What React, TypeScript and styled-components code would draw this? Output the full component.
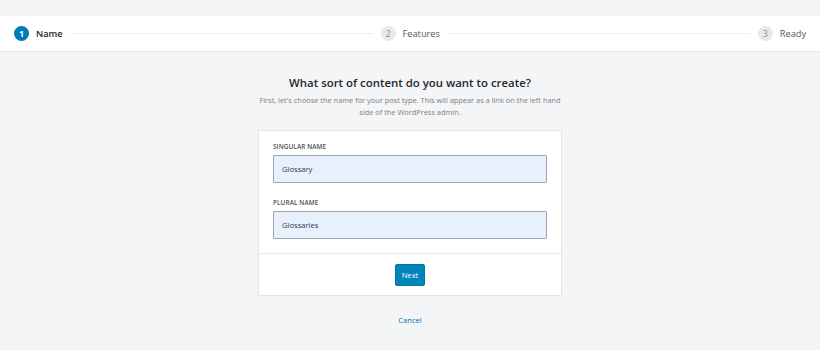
import React from "react";
import styled, { createGlobalStyle } from "styled-components";

const Global = createGlobalStyle`
  html, body { margin: 0; padding: 0; background: #f3f5f6; }
  body { font-family: "Open Sans", "Noto Sans", Arial, sans-serif; color: #23282d; }
  * { box-sizing: border-box; }
`;

const Page = styled.div`
  width: 820px;
  height: 350px;
  padding-top: 16px;
  display: flex;
  flex-direction: column;
  align-items: center;
`;

const Steps = styled.div`
  align-self: stretch;
  height: 36px;
  background: #fff;
  border-bottom: 1px solid #e6e8ea;
  display: flex;
  align-items: center;
  padding: 0 14px 0 14px;
  gap: 6px;
`;

const Step = styled.div`
  display: flex;
  align-items: center;
  gap: 7px;
  flex-shrink: 0;
`;

const Circle = styled.span<{ $active?: boolean }>`
  width: 15px;
  height: 15px;
  border-radius: 50%;
  background: ${(p) => (p.$active ? "#0079b8" : "#e8e9ea")};
  color: ${(p) => (p.$active ? "#fff" : "#8c8f94")};
  font-size: 9px;
  font-weight: ${(p) => (p.$active ? 700 : 400)};
  display: flex;
  align-items: center;
  justify-content: center;
  line-height: 1;
`;

const StepLabel = styled.span<{ $active?: boolean }>`
  font-size: 9.2px;
  font-weight: ${(p) => (p.$active ? 600 : 400)};
  color: ${(p) => (p.$active ? "#23282d" : "#50575e")};
`;

const Line = styled.span`
  flex: 1;
  height: 1px;
  background: #eceeef;
  margin: 0 2px;
`;

const Title = styled.h1`
  margin: 23px 0 0;
  font-size: 11.4px;
  font-weight: 600;
  color: #23282d;
  text-align: center;
  line-height: 16px;
`;

const Sub = styled.p`
  margin: 3px 0 0;
  width: 312px;
  font-size: 7.4px;
  line-height: 12px;
  color: #7c8085;
  text-align: center;
`;

const Card = styled.div`
  margin-top: 12px;
  width: 304px;
  background: #fff;
  border: 1px solid #e3e5e7;
  display: flex;
  flex-direction: column;
`;

const Fields = styled.div`
  padding: 11px 14px 14px;
  display: flex;
  flex-direction: column;
  gap: 15px;
`;

const Field = styled.div`
  display: flex;
  flex-direction: column;
  gap: 4px;
`;

const Label = styled.label`
  font-size: 6.4px;
  font-weight: 600;
  letter-spacing: 0.1px;
  color: #4a4f55;
  text-transform: uppercase;
  line-height: 9px;
`;

const Input = styled.div`
  height: 28px;
  background: #e8f0fe;
  border: 1px solid #a2a6ab;
  border-radius: 1px;
  padding: 0 8px;
  display: flex;
  align-items: center;
  font-size: 7.6px;
  color: #32373c;
`;

const Footer = styled.div`
  border-top: 1px solid #e8eaec;
  height: 42px;
  display: flex;
  align-items: center;
  justify-content: center;
`;

const Button = styled.button`
  height: 22px;
  padding: 0 6px;
  background: #0085ba;
  border: 1px solid #0073aa;
  border-radius: 2px;
  color: #fff;
  font-family: inherit;
  font-size: 7.6px;
  cursor: pointer;
`;

const Cancel = styled.a`
  margin-top: 19px;
  font-size: 7.6px;
  color: #0073aa;
  text-decoration: none;
`;

export default function App() {
  return (
    <>
      <Global />
      <Page>
        <Steps>
          <Step>
            <Circle $active>1</Circle>
            <StepLabel $active>Name</StepLabel>
          </Step>
          <Line />
          <Step>
            <Circle>2</Circle>
            <StepLabel>Features</StepLabel>
          </Step>
          <Line />
          <Step>
            <Circle>3</Circle>
            <StepLabel>Ready</StepLabel>
          </Step>
        </Steps>
        <Title>What sort of content do you want to create?</Title>
        <Sub>
          First, let's choose the name for your post type. This will appear as a link on the left hand side of the WordPress admin.
        </Sub>
        <Card>
          <Fields>
            <Field>
              <Label>Singular Name</Label>
              <Input>Glossary</Input>
            </Field>
            <Field>
              <Label>Plural Name</Label>
              <Input>Glossaries</Input>
            </Field>
          </Fields>
          <Footer>
            <Button>Next</Button>
          </Footer>
        </Card>
        <Cancel href="#">Cancel</Cancel>
      </Page>
    </>
  );
}
